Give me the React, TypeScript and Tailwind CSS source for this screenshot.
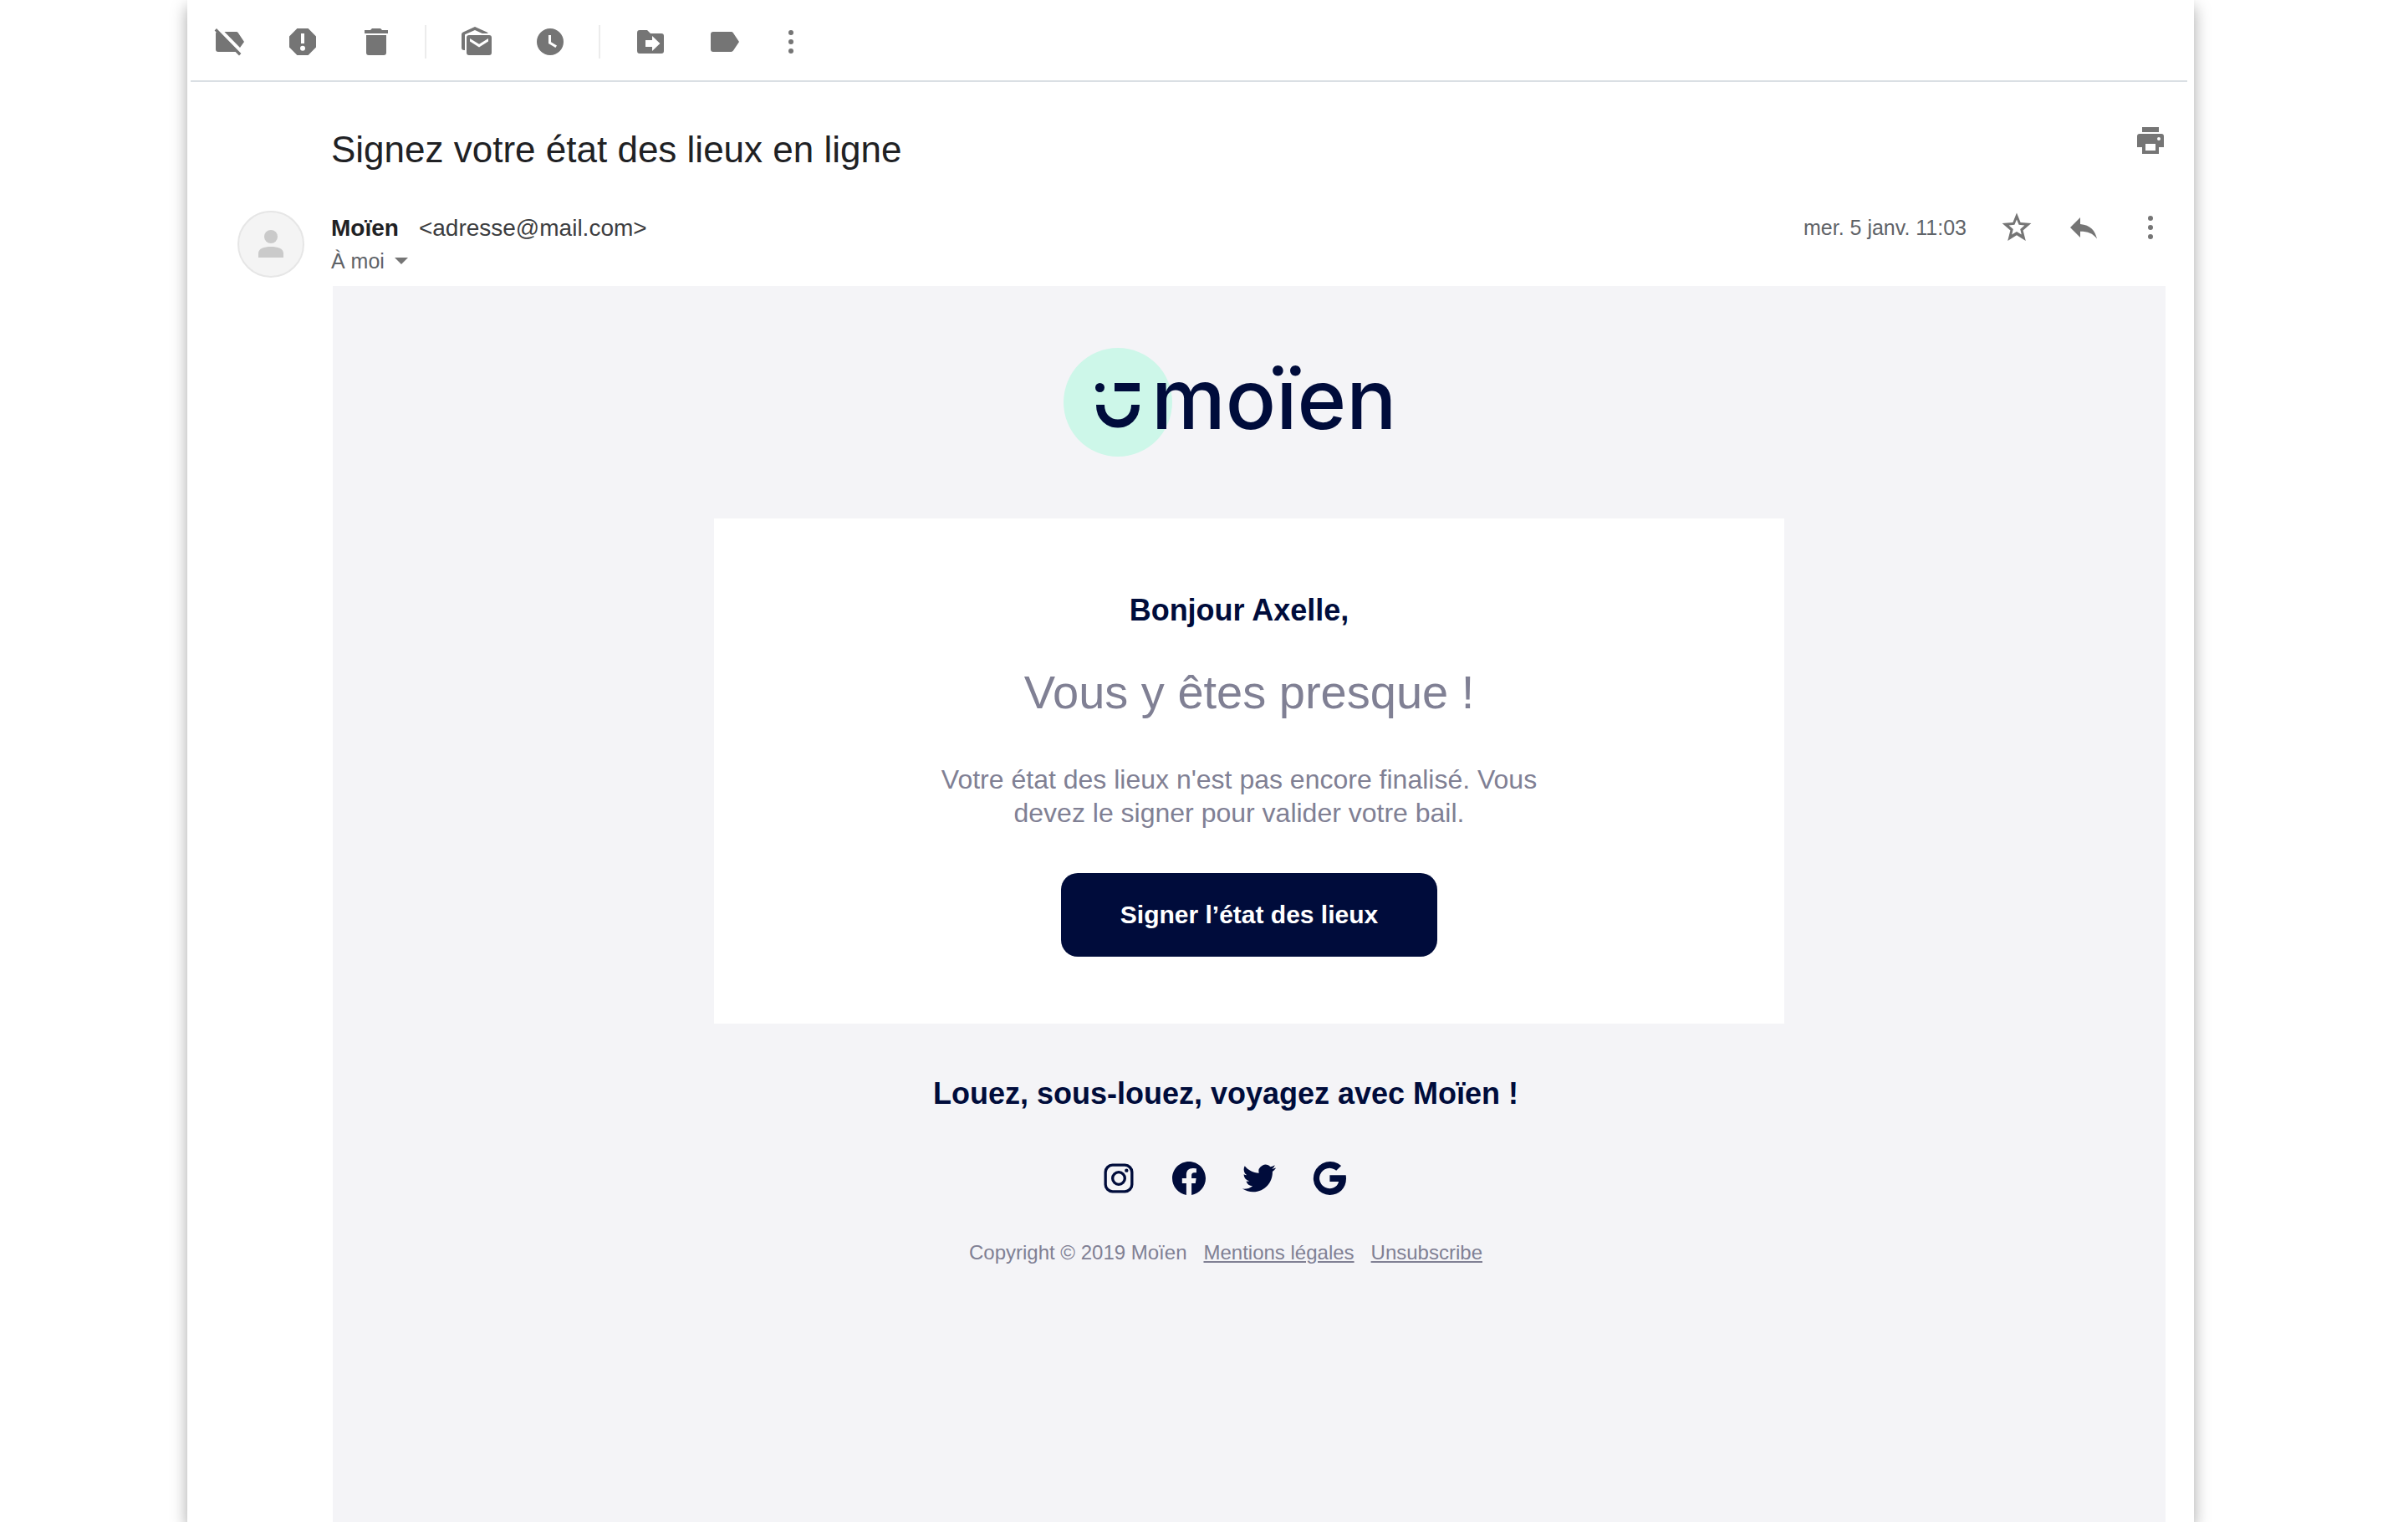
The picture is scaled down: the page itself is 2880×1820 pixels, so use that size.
import React from "react";

type IconProps = { label: string; children: React.ReactNode };

function IconButton({ label, children }: IconProps) {
  return (
    <button type="button" aria-label={label} className="block size-10 shrink-0 text-[#757575]">
      <svg viewBox="0 0 20 20" fill="currentColor" className="size-10" aria-hidden="true">
        {children}
      </svg>
    </button>
  );
}

function Dots() {
  return (
    <>
      <circle cx="10" cy="4.5" r="1.5" />
      <circle cx="10" cy="10" r="1.5" />
      <circle cx="10" cy="15.5" r="1.5" />
    </>
  );
}

function Divider() {
  return <div className="h-10 w-0.5 bg-[#ececec]" />;
}

function Toolbar() {
  return (
    <div className="mr-2 ml-1 flex h-[98px] items-center border-b-2 border-[#dadfe4] pt-1 pl-[26px]">
      <div className="flex gap-12">
        <IconButton label="Retirer le libellé">
          <path d="M7.200 4h7a1.500 1.500 0 0 1 1.300.7L19 10l-2.500 3.500z" />
          <path d="M2.500 2 1.300 3.200l1 1A1.500 1.500 0 0 0 2 5v9.500A1.500 1.500 0 0 0 3.500 16h10.300l2.200 2.200 1.200-1.200z" />
        </IconButton>
        <IconButton label="Signaler comme spam">
          <path
            fillRule="evenodd"
            d="M6.700 2h6.600L18 6.700v6.600L13.300 18H6.700L2 13.300V6.700zM9 5v6h2V5zM10 12.400a1.500 1.500 0 1 0 0 3 1.500 1.500 0 0 0 0-3z"
          />
        </IconButton>
        <IconButton label="Supprimer">
          <path d="M3 3h3.500l1-1h5l1 1H17v2H3zM4 6h12v10.500a1.500 1.500 0 0 1-1.500 1.500h-9A1.500 1.500 0 0 1 4 16.500z" />
        </IconButton>
      </div>
      <div className="pr-10 pl-[38px]">
        <Divider />
      </div>
      <div className="flex gap-12">
        <IconButton label="Marquer comme non lu">
          <path d="M1 13.500V5.500A1.500 1.500 0 0 1 1.900 4.200L9 1l7.200 3.200.8.800h-3.600L9 3 3 5.600V15h-.5A1.500 1.500 0 0 1 1 13.500z" />
          <path
            fillRule="evenodd"
            d="M5.500 6h12A1.500 1.500 0 0 1 19 7.500v9a1.500 1.500 0 0 1-1.500 1.500h-12A1.500 1.500 0 0 1 4 16.500v-9A1.500 1.500 0 0 1 5.500 6zM6 8v1.800l5.500 3.400L17 9.800V8l-5.500 3.400z"
          />
        </IconButton>
        <IconButton label="Mettre en attente">
          <path
            fillRule="evenodd"
            d="M10 2a8 8 0 1 1 0 16 8 8 0 0 1 0-16zM9 6v5l4.200 2.500.8-1.300-3.500-2.100V6z"
          />
        </IconButton>
      </div>
      <div className="px-[38px]">
        <Divider />
      </div>
      <div className="flex items-center gap-12 pl-0.5">
        <IconButton label="Déplacer vers">
          <path
            fillRule="evenodd"
            d="M3.500 3H8l2 2h6.500A1.500 1.500 0 0 1 18 6.500v9a1.500 1.500 0 0 1-1.500 1.500h-13A1.500 1.500 0 0 1 2 15.500v-11A1.500 1.500 0 0 1 3.500 3zM11 6.500V9H7v4h4v2.500l4.700-4.500z"
          />
        </IconButton>
        <IconButton label="Libellés">
          <path d="M3.500 4h10.700a1.500 1.500 0 0 1 1.300.7L19 10l-3.500 5.300a1.500 1.500 0 0 1-1.300.7H3.500A1.500 1.500 0 0 1 2 14.500v-9A1.500 1.500 0 0 1 3.500 4z" />
        </IconButton>
      </div>
      <div className="pl-10">
        <IconButton label="Plus">
          <Dots />
        </IconButton>
      </div>
    </div>
  );
}

function MessageHeader() {
  return (
    <header className="pr-8 pb-2.5 pl-[60px]">
      <div className="flex items-start justify-between pt-[50px] pl-28">
        <h1 className="pt-0.5 text-[44px] leading-[58px] text-[#202124]">
          Signez votre état des lieux en ligne
        </h1>
        <IconButton label="Imprimer">
          <path
            fillRule="evenodd"
            d="M5 2h10v3H5zM3.500 6h13A1.500 1.500 0 0 1 18 7.500V14h-3v4H5v-4H2V7.500A1.500 1.500 0 0 1 3.500 6zM7 12v4h6v-4zM15 8a1 1 0 1 0 0 2 1 1 0 0 0 0-2z"
          />
        </IconButton>
      </div>
      <div className="flex items-start pt-11">
        <div className="flex size-20 shrink-0 items-center justify-center rounded-full border-2 border-[#e6e6e6] bg-[#f4f4f4]">
          <svg viewBox="0 0 30 34" className="h-[34px] w-[30px]" fill="#cacaca" aria-hidden="true">
            <circle cx="15" cy="8" r="8" />
            <path d="M0 33v-5c0-6 7-8 15-8s15 2 15 8v5z" />
          </svg>
        </div>
        <div className="flex-1 pl-8">
          <p className="flex items-center gap-6 text-[28px] leading-[42px] text-[#202124]">
            <strong>Moïen</strong>
            <span className="text-[#3c3d40]">&lt;adresse@mail.com&gt;</span>
          </p>
          <button type="button" className="flex items-center gap-3 text-[25px] leading-9 text-[#5f6368]">
            À moi
            <svg viewBox="0 0 16 8" className="h-2 w-4" fill="#757575" aria-hidden="true">
              <path d="M0 0h16L8 8z" />
            </svg>
          </button>
        </div>
        <div className="flex items-center">
          <time className="pr-10 text-[25px] leading-10 text-[#5f6368]">mer. 5 janv. 11:03</time>
          <div className="flex gap-10">
            <IconButton label="Suivre">
              <path
                fillRule="evenodd"
                d="M10 1.300l2.300 5.700 6.400.5-4.900 4.200 1.600 6.300L10 14.600 4.600 18l1.600-6.300L1.300 7.500 7.700 7zM10 5.300 8.700 8.400l-3.400.3 2.600 2.300-.8 3.300 2.900-1.800 2.900 1.800-.8-3.300 2.600-2.300-3.400-.3z"
              />
            </IconButton>
            <IconButton label="Répondre">
              <path d="M8 4v4c6 .5 9 4 10 8.800C15.500 13.500 12.500 12.400 8 12.400V16l-6-6z" />
            </IconButton>
            <IconButton label="Plus d'options">
              <Dots />
            </IconButton>
          </div>
        </div>
      </div>
    </header>
  );
}

function Logo() {
  return (
    <svg viewBox="0 0 404 130" className="h-[130px] w-[404px] overflow-visible" role="img" aria-label="moïen">
      <circle cx="65" cy="65" r="65" fill="#cdf7e9" />
      <g fill="#000c3b">
        <circle cx="43.500" cy="47.500" r="5.500" />
        <rect x="61" y="42" width="30" height="10" />
      </g>
      <path d="M44 68c0 30 42 30 42 0" fill="none" stroke="#000c3b" strokeWidth="10" />
      <text x="105" y="97" fontSize="100" fontWeight="500" fill="#000c3b" className="font-['Inter',sans-serif]">
        moïen
      </text>
    </svg>
  );
}

function SocialLink({ label, children }: IconProps) {
  return (
    <a href="#" aria-label={label} className="size-10">
      <svg viewBox="0 0 24 24" fill="#000c3b" className="size-10" aria-hidden="true">
        {children}
      </svg>
    </a>
  );
}

function EmailBody() {
  return (
    <div className="mr-[34px] ml-[174px] flex flex-1 flex-col items-center bg-[#f4f4f7] pt-[74px] text-[#000c3b]">
      <div className="pr-10">
        <Logo />
      </div>
      <section className="mt-[74px] flex w-full max-w-[1280px] flex-col items-center bg-white pt-[84px] pb-20 text-center">
        <h2 className="pr-6 text-4xl leading-[52px] font-bold">Bonjour Axelle,</h2>
        <p className="pt-9 text-[56px] leading-[72px] text-[#808094]">Vous y êtes presque&nbsp;!</p>
        <p className="max-w-[760px] pt-12 pr-6 text-[32px] leading-10 text-[#808094]">
          Votre état des lieux n'est pas encore finalisé. Vous devez le signer pour valider votre bail.
        </p>
        <button type="button" className="mt-[52px] h-[100px] w-[450px] rounded-[20px] bg-[#000c3b] text-3xl font-bold text-white">
          Signer l’état des lieux
        </button>
      </section>
      <footer className="flex flex-col items-center pt-[58px] pr-14">
        <p className="text-4xl leading-[52px] font-bold">Louez, sous-louez, voyagez avec Moïen !</p>
        <nav className="flex gap-11 pt-[55px] pr-1">
          <SocialLink label="Instagram">
            <path
              fillRule="evenodd"
              d="M7.500 1.500h9a6 6 0 0 1 6 6v9a6 6 0 0 1-6 6h-9a6 6 0 0 1-6-6v-9a6 6 0 0 1 6-6zm.2 2a4.200 4.200 0 0 0-4.200 4.200v8.600a4.200 4.200 0 0 0 4.200 4.200h8.600a4.200 4.200 0 0 0 4.200-4.200V7.700a4.200 4.200 0 0 0-4.200-4.200zM12 6.600a5.400 5.400 0 1 1 0 10.800 5.400 5.400 0 0 1 0-10.800zm0 2a3.400 3.400 0 1 0 0 6.800 3.400 3.400 0 0 0 0-6.800z"
            />
            <circle cx="17.600" cy="6.400" r="1.300" />
          </SocialLink>
          <SocialLink label="Facebook">
            <path d="M24 12.073c0-6.627-5.373-12-12-12s-12 5.373-12 12c0 5.990 4.388 10.954 10.125 11.854v-8.385H7.078v-3.470h3.047V9.430c0-3.007 1.792-4.669 4.533-4.669 1.312 0 2.686.235 2.686.235v2.953H15.830c-1.491 0-1.956.925-1.956 1.874v2.250h3.328l-.532 3.470h-2.796v8.385C19.612 23.027 24 18.062 24 12.073z" />
          </SocialLink>
          <SocialLink label="Twitter">
            <path d="M23.953 4.570a10 10 0 01-2.825.775 4.958 4.958 0 002.163-2.723c-.951.555-2.005.959-3.127 1.184a4.920 4.920 0 00-8.384 4.482C7.690 8.095 4.067 6.130 1.640 3.162a4.822 4.822 0 00-.666 2.475c0 1.710.870 3.213 2.188 4.096a4.904 4.904 0 01-2.228-.616v.060a4.923 4.923 0 003.946 4.827 4.996 4.996 0 01-2.212.085 4.936 4.936 0 004.604 3.417 9.867 9.867 0 01-6.102 2.105c-.390 0-.779-.023-1.170-.067a13.995 13.995 0 007.557 2.209c9.053 0 13.998-7.496 13.998-13.985 0-.210 0-.420-.015-.630A9.935 9.935 0 0024 4.590z" />
          </SocialLink>
          <SocialLink label="Google">
            <path d="M12.240 9.800v4.600h6.400c-.6 2.800-3 4.900-6.400 4.900a7.300 7.300 0 1 1 4.700-12.800l3.500-3.500A12 12 0 1 0 12.240 24C19 24 24 19.200 24 12.200c0-.8-.1-1.600-.2-2.400z" />
          </SocialLink>
        </nav>
        <p className="flex gap-5 pt-[53px] text-2xl leading-8 text-[#808094]">
          <span>Copyright © 2019 Moïen</span>
          <a href="#" className="underline">Mentions légales</a>
          <a href="#" className="underline">Unsubscribe</a>
        </p>
      </footer>
    </div>
  );
}

export default function App() {
  return (
    <div className="min-h-screen overflow-hidden bg-white pr-64 pl-56 font-['Liberation_Sans',Arial,sans-serif]">
      <main className="flex min-h-screen flex-col bg-white shadow-[0_8px_18px_rgba(0,0,0,0.35)]">
        <Toolbar />
        <MessageHeader />
        <EmailBody />
      </main>
    </div>
  );
}
